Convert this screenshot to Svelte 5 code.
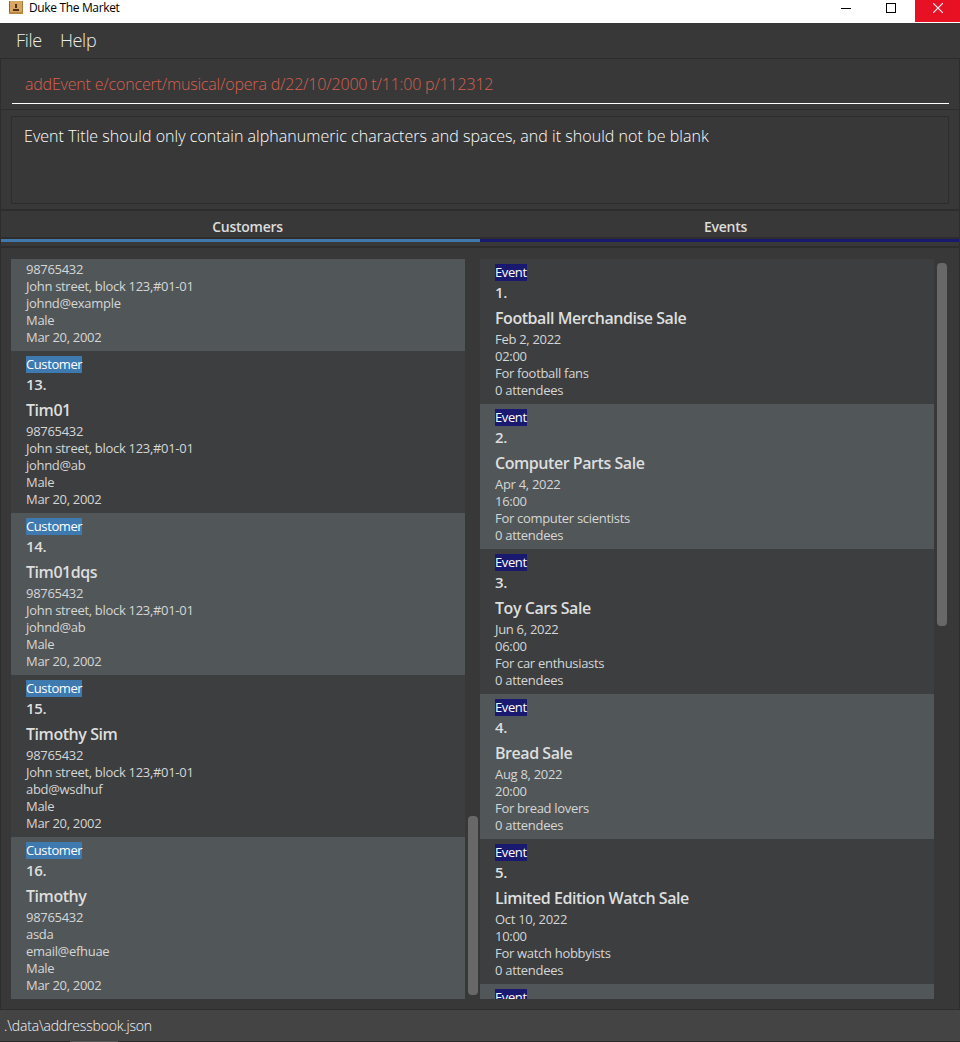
<script>
  const customers = [
    { n: 12, name: '', lines: ['98765432', 'John street, block 123,#01-01', 'johnd@example', 'Male', 'Mar 20, 2002'] },
    { n: 13, name: 'Tim01', lines: ['98765432', 'John street, block 123,#01-01', 'johnd@ab', 'Male', 'Mar 20, 2002'] },
    { n: 14, name: 'Tim01dqs', lines: ['98765432', 'John street, block 123,#01-01', 'johnd@ab', 'Male', 'Mar 20, 2002'] },
    { n: 15, name: 'Timothy Sim', lines: ['98765432', 'John street, block 123,#01-01', 'abd@wsdhuf', 'Male', 'Mar 20, 2002'] },
    { n: 16, name: 'Timothy', lines: ['98765432', 'asda', 'email@efhuae', 'Male', 'Mar 20, 2002'] }
  ];
  const events = [
    { n: 1, name: 'Football Merchandise Sale', lines: ['Feb 2, 2022', '02:00', 'For football fans', '0 attendees'] },
    { n: 2, name: 'Computer Parts Sale', lines: ['Apr 4, 2022', '16:00', 'For computer scientists', '0 attendees'] },
    { n: 3, name: 'Toy Cars Sale', lines: ['Jun 6, 2022', '06:00', 'For car enthusiasts', '0 attendees'] },
    { n: 4, name: 'Bread Sale', lines: ['Aug 8, 2022', '20:00', 'For bread lovers', '0 attendees'] },
    { n: 5, name: 'Limited Edition Watch Sale', lines: ['Oct 10, 2022', '10:00', 'For watch hobbyists', '0 attendees'] },
    { n: 6, name: '', lines: [] }
  ];
</script>

<div class="window">
  <header class="titlebar">
    <svg class="appicon" width="16" height="16" viewBox="0 0 16 16">
      <rect x="0" y="1" width="14" height="13" fill="#d9a560" />
      <rect x="0" y="1" width="1" height="13" fill="#8a6a3c" />
      <rect x="13" y="1" width="1" height="13" fill="#a87b3e" />
      <rect x="0" y="12" width="14" height="2" fill="#b98745" />
      <path d="M6 4h2v4H6zM4 9h6v2H4z" fill="#4a3316" />
    </svg>
    <span class="apptitle">Duke The Market</span>
    <div class="winctrls">
      <div class="ctrl min"><svg width="10" height="10" viewBox="0 0 10 10"><path d="M0 5.5h10" stroke="#000" stroke-width="1" /></svg></div>
      <div class="ctrl max"><svg width="10" height="10" viewBox="0 0 10 10"><rect x=".5" y=".5" width="9" height="9" fill="none" stroke="#000" /></svg></div>
      <div class="ctrl close"><svg width="10" height="10" viewBox="0 0 10 10"><path d="M0 0l10 10M10 0L0 10" stroke="#fff" stroke-width="1.1" /></svg></div>
    </div>
  </header>

  <nav class="menubar"><span>File</span><span>Help</span></nav>

  <section class="command">
    <div class="cmdtext">addEvent e/concert/musical/opera d/22/10/2000 t/11:00 p/112312</div>
  </section>

  <section class="result">
    <div class="resultbox">Event Title should only contain alphanumeric characters and spaces, and it should not be blank</div>
  </section>

  <div class="tabs">
    <div class="tabheads">
      <div class="tab">Customers</div>
      <div class="tab">Events</div>
    </div>
    <div class="tabline">
      <div class="bar blue"></div>
      <div class="bar navy"></div>
    </div>
  </div>

  <main class="panels">
    <div class="panel left">
      <div class="list bottom">
        {#each customers as c, i}
          <article class="card cust" class:alt={i % 2 === 0}>
            <div class="tag custtag">Customer</div>
            <div class="num">{c.n}.</div>
            <div class="name">{c.name}</div>
            {#each c.lines as l}<div class="line">{l}</div>{/each}
          </article>
        {/each}
      </div>
      <div class="track end"><div class="thumb" style="height:179px"></div></div>
    </div>
    <div class="panel right">
      <div class="list">
        {#each events as e, i}
          <article class="card ev" class:alt={i % 2 === 1}>
            <div class="tag evtag">Event</div>
            <div class="num">{e.n}.</div>
            <div class="name">{e.name}</div>
            {#each e.lines as l}<div class="line">{l}</div>{/each}
          </article>
        {/each}
      </div>
      <div class="track"><div class="thumb" style="height:363px"></div></div>
    </div>
  </main>

  <footer class="status">.\data\addressbook.json</footer>
  <div class="taskedge"><div class="seg"></div></div>
</div>

<style>
  :global(body) { margin: 0; background: #383838; }
  .window {
    width: 960px; height: 1042px; display: flex; flex-direction: column;
    background: #383838; overflow: hidden;
    font-family: "Open Sans", "Noto Sans", sans-serif; color: #fff;
  }
  .titlebar {
    height: 23px; flex: none; background: #fff; display: flex; align-items: flex-start;
    color: #000; box-sizing: border-box;
  }
  .appicon { margin: 0 0 0 9px; flex: none; }
  .apptitle { margin-left: 4px; font: 12px/15px "Open Sans", sans-serif; letter-spacing: -.35px; }
  .winctrls { margin-left: auto; display: flex; }
  .ctrl { width: 44px; height: 22px; display: flex; align-items: center; justify-content: center; padding-bottom: 7px; box-sizing: border-box; }
  .ctrl.min { margin-right: 1px; }
  .ctrl.max { margin-right: 2px; }
  .ctrl.close { width: 45px; background: #e81123; }

  .menubar {
    height: 36px; flex: none; box-sizing: border-box; padding-left: 16px; padding-bottom: 2px; display: flex; gap: 18px;
    align-items: center; font-size: 18px; font-weight: 300; color: #ececec; letter-spacing: -.3px;
    border-bottom: 1px solid #2d2d2d;
  }
  .command {
    height: 51px; flex: none; box-sizing: border-box; padding: 0 10px 0 11px;
    border-left: 1px solid #2d2d2d; border-right: 1px solid #2d2d2d; border-bottom: 1px solid #2d2d2d;
  }
  .cmdtext {
    height: 45px; box-sizing: border-box; border-bottom: 1px solid #fff; padding: 13px 0 0 13px;
    font-size: 16px; line-height: 24px; font-weight: 300; color: #d8604f; letter-spacing: -.19px; white-space: nowrap;
  }
  .result {
    height: 101px; flex: none; box-sizing: border-box; padding: 6px 10px 5px 10px;
    border-left: 1px solid #2d2d2d; border-right: 1px solid #2d2d2d; border-bottom: 2px solid #2d2d2d;
  }
  .resultbox {
    height: 88px; box-sizing: border-box; border: 1px solid #2d2d2d; padding: 7px 12px;
    font-size: 16px; line-height: 24px; font-weight: 300; color: #fff; letter-spacing: .04px; white-space: nowrap;
  }
  .tabs { flex: none; border-left: 1px solid #2d2d2d; border-right: 1px solid #2d2d2d; border-bottom: 2px solid #2d2d2d; }
  .tabheads { height: 26px; display: flex; }
  .tab {
    flex: 1; text-align: center; font-size: 14px; line-height: 31px; height: 26px; font-weight: 600;
    color: #dcdcdc; letter-spacing: -.25px; padding-left: 12px; box-sizing: border-box;
  }
  .tab:first-child { width: 479px; flex: none; padding-left: 14px; }
  .tabline { border-top: 2px solid #2d2d2d; height: 7px; display: flex; }
  .bar { height: 3px; }
  .blue { width: 479px; background: #4078ad; }
  .navy { flex: 1; background: #191970; }

  .panels { flex: none; height: 761px; display: flex; padding-top: 11px; box-sizing: border-box; border-left: 1px solid #2d2d2d; border-right: 1px solid #2d2d2d; }
  .panel { display: flex; height: 740px; }
  .panel.left { width: 479px; padding-left: 10px; box-sizing: border-box; }
  .panel.right { flex: 1; }
  .list { width: 454px; height: 740px; overflow: hidden; display: flex; flex-direction: column; flex: none; }
  .list.bottom { justify-content: flex-end; }
  .card {
    flex: none; box-sizing: border-box; background: #3c3e3f; padding: 5px 0 0 15px;
    font-size: 13px; color: #dcdcdc;
  }
  .card.alt { background: #515658; }
  .card.cust { height: 162px; }
  .card.ev { height: 145px; }
  .tag { display: block; height: 17px; line-height: 17px; font-size: 13px; letter-spacing: -.4px; color: #fff; }
  .custtag { background: #3e7ab0; width: 56px; }
  .evtag { background: #191970; width: 32px; }
  .num { font-size: 15px; font-weight: 600; line-height: 23px; height: 25px; letter-spacing: -.3px; color: #dedede; }
  .name { font-size: 16px; font-weight: 600; line-height: 25px; height: 25px; letter-spacing: -.45px; color: #dedede; }
  .line { height: 17px; line-height: 17px; letter-spacing: -.3px; white-space: nowrap; color: #d6d6d6; }
  .track { width: 10px; margin-left: 3px; height: 740px; box-sizing: border-box; padding: 4px 0; display: flex; flex-direction: column; flex: none; }
  .track.end { justify-content: flex-end; }
  .thumb { width: 10px; background: #686868; border-radius: 4px; flex: none; }

  .status {
    flex: none; height: 32px; box-sizing: border-box; background: #444; border-top: 1px solid #2d2d2d;
    padding-left: 4px; font-size: 14px; line-height: 31px; font-weight: 300; color: #f5f5f5; letter-spacing: -.18px;
  }
  .taskedge { flex: 1; background: #2a2a2a; }
  .seg { margin-left: 70px; width: 48px; height: 100%; background: #555; }
</style>
